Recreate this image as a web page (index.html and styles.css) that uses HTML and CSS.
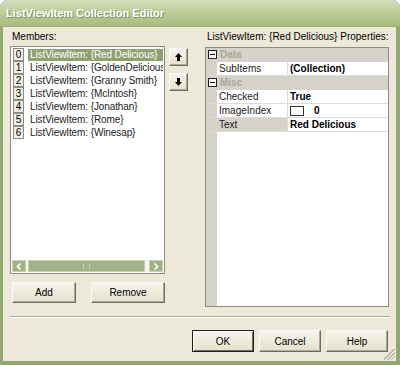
FILE: index.html
```html
<!DOCTYPE html>
<html>
<head>
<meta charset="utf-8">
<link rel="stylesheet" href="styles.css">
</head>
<body>
<div class="window">
  <div class="titlebar"><span class="title">ListViewItem Collection Editor</span></div>
  <div class="client">
    <div class="main">
      <div class="left">
        <div class="label">Members:</div>
        <div class="listrow">
          <div class="listbox">
            <ul class="items">
              <li class="sel"><span class="idx">0</span><span class="txt">ListViewItem: {Red Delicious}</span></li>
              <li><span class="idx">1</span><span class="txt">ListViewItem: {GoldenDelicious}</span></li>
              <li><span class="idx">2</span><span class="txt">ListViewItem: {Granny Smith}</span></li>
              <li><span class="idx">3</span><span class="txt">ListViewItem: {McIntosh}</span></li>
              <li><span class="idx">4</span><span class="txt">ListViewItem: {Jonathan}</span></li>
              <li><span class="idx">5</span><span class="txt">ListViewItem: {Rome}</span></li>
              <li><span class="idx">6</span><span class="txt">ListViewItem: {Winesap}</span></li>
            </ul>
            <div class="hscroll">
              <div class="sbtn"><svg width="6" height="7" viewBox="0 0 6 7"><path d="M4.5 0.5 L1.5 3.5 L4.5 6.5" fill="none" stroke="#fff" stroke-width="1.6"/></svg></div>
              <div class="thumb"><span class="grip-lines"></span></div>
              <div class="sbtn"><svg width="6" height="7" viewBox="0 0 6 7"><path d="M1.5 0.5 L4.5 3.5 L1.5 6.5" fill="none" stroke="#fff" stroke-width="1.6"/></svg></div>
            </div>
          </div>
          <div class="updown">
            <button class="btn arrow"><svg width="7" height="8" viewBox="0 0 7 8"><path d="M3.5 0 L7 4 L5 4 L5 8 L2 8 L2 4 L0 4 Z" fill="#000"/></svg></button>
            <button class="btn arrow"><svg width="7" height="8" viewBox="0 0 7 8"><path d="M3.5 8 L7 4 L5 4 L5 0 L2 0 L2 4 L0 4 Z" fill="#000"/></svg></button>
          </div>
        </div>
        <div class="addrem">
          <button class="btn add">Add</button>
          <button class="btn remove">Remove</button>
        </div>
      </div>
      <div class="right">
        <div class="label">ListViewItem: {Red Delicious} Properties:</div>
        <div class="grid">
          <div class="row cat"><span class="margin"><span class="exp"></span></span><span class="catname">Data</span></div>
          <div class="row"><span class="margin"></span><span class="name">SubItems</span><span class="value b">(Collection)</span></div>
          <div class="row cat"><span class="margin"><span class="exp"></span></span><span class="catname">Misc</span></div>
          <div class="row"><span class="margin"></span><span class="name">Checked</span><span class="value b">True</span></div>
          <div class="row"><span class="margin"></span><span class="name">ImageIndex</span><span class="value b"><span class="imgbox"></span>0</span></div>
          <div class="row selrow"><span class="margin"></span><span class="name">Text</span><span class="value b">Red Delicious</span></div>
        </div>
      </div>
    </div>
    <div class="sep"></div>
    <div class="footer">
      <button class="btn ok">OK</button>
      <button class="btn">Cancel</button>
      <button class="btn">Help</button>
    </div>
    <div class="sizegrip"></div>
  </div>
</div>
</body>
</html>
```

FILE: styles.css
```css
html, body {
  margin: 0;
  padding: 0;
  background: #ffffff;
}
body {
  font-family: "Liberation Sans", Arial, sans-serif;
  font-size: 10px;
  color: #000;
}
.window {
  width: 400px;
  height: 365px;
  display: flex;
  flex-direction: column;
  box-sizing: border-box;
  background: #93a871;
  border-radius: 7px 7px 0 0;
  overflow: hidden;
}
.titlebar {
  height: 27px;
  flex: none;
  display: flex;
  align-items: center;
  padding-left: 6px;
  background: linear-gradient(#d6e0bd 0%, #c3d1a2 35%, #b3c48c 70%, #a9bb82 100%);
  border-bottom: 1px solid #9aae77;
  box-sizing: border-box;
}
.title {
  font-family: "Liberation Sans", Arial, sans-serif;
  font-weight: bold;
  font-size: 11px;
  color: #fff;
  text-shadow: 1px 1px 0 #7f9160;
}
.client {
  position: relative;
  margin: 0 4px 4px 3px;
  flex: 1;
  background: #ece9d8;
  padding: 4px 7px 9px 7px;
  display: flex;
  flex-direction: column;
}
.main {
  display: flex;
  height: 276px;
}
.left {
  width: 178px;
  display: flex;
  flex-direction: column;
}
.label {
  height: 12px;
  line-height: 12px;
  padding-left: 2px;
  white-space: nowrap;
}
.left .label { margin-bottom: 3px; }
.right .label { margin-bottom: 4px; }
.listrow {
  display: flex;
  gap: 4px;
}
.listbox {
  width: 155px;
  height: 228px;
  box-sizing: border-box;
  border: 1px solid #8d8b82;
  background: #fff;
  display: flex;
  flex-direction: column;
  padding: 1px;
}
.items {
  list-style: none;
  margin: 0;
  padding: 0;
  flex: 1;
}
.items li {
  height: 13px;
  display: flex;
  align-items: center;
  white-space: nowrap;
  overflow: hidden;
}
.idx {
  width: 9px;
  height: 11px;
  flex: none;
  border: 1px solid #8d8b82;
  background: #f0efe8;
  text-align: center;
  line-height: 11px;
  margin-left: 1px;
  margin-right: 4px;
}
.txt {
  padding-left: 2px;
  height: 12px;
  line-height: 12px;
  flex: 1;
  letter-spacing: -0.1px;
  color: #222;
}
.sel .txt {
  background: #8f9f6d;
  color: #fff;
}
.hscroll {
  height: 12px;
  display: flex;
  gap: 2px;
  background: #f5f4ee;
}
.sbtn {
  width: 14px;
  height: 12px;
  box-sizing: border-box;
  background: #a1b384;
  border: 1px solid #c7d2b1;
  display: flex;
  align-items: center;
  justify-content: center;
}
.thumb {
  width: 117px;
  height: 12px;
  box-sizing: border-box;
  background: #a1b384;
  border: 1px solid #c5d1ae;
  display: flex;
  align-items: center;
  justify-content: center;
}
.grip-lines {
  width: 5px;
  height: 5px;
  border-left: 1px solid #c9d4b4;
  border-right: 1px solid #c9d4b4;
}
.hscroll .sbtn:last-child { margin-left: auto; }
.updown {
  display: flex;
  flex-direction: column;
  gap: 7px;
  padding-top: 2px;
}
.btn {
  font-family: "Liberation Sans", Arial, sans-serif;
  font-size: 10px;
  color: #000;
  background: linear-gradient(#f6f5ee, #ece9d8 60%, #e3e0cd);
  border: 1px solid;
  border-color: #fbfaf5 #6f6d62 #6f6d62 #fbfaf5;
  box-shadow: inset -1px -1px 0 #aca899;
  padding: 0;
  margin: 0;
  box-sizing: border-box;
  height: 22px;
  width: 62px;
  display: flex;
  align-items: center;
  justify-content: center;
}
.btn.arrow {
  width: 19px;
  height: 18px;
}
.addrem {
  display: flex;
  margin-top: 8px;
  padding-left: 2px;
  gap: 15px;
}
.btn.add { width: 64px; height: 21px; }
.btn.remove { width: 74px; height: 21px; }
.right {
  margin-left: 17px;
  width: 185px;
  display: flex;
  flex-direction: column;
}
.grid {
  height: 260px;
  box-sizing: border-box;
  border: 1px solid #8d8b82;
  background: #fff;
  background-image: linear-gradient(to right, #d5d2c9 0, #d5d2c9 11px, transparent 11px);
}
.row {
  height: 14px;
  display: flex;
  box-sizing: border-box;
  border-bottom: 1px solid #dedbd1;
  line-height: 13px;
  white-space: nowrap;
}
.margin {
  width: 11px;
  flex: none;
  background: #d5d2c9;
  position: relative;
}
.name {
  width: 71px;
  flex: none;
  padding-left: 2px;
  box-sizing: border-box;
  border-right: 1px solid #dedbd1;
  color: #202020;
}
.value {
  flex: 1;
  padding-left: 2px;
  display: flex;
  align-items: center;
}
.b { font-weight: bold; }
.cat {
  background: #d5d2c9;
  border-bottom-color: #d5d2c9;
}
.catname {
  font-weight: bold;
  color: #a9a79b;
  padding-left: 3px;
}
.exp {
  position: absolute;
  left: 2px;
  top: 2px;
  width: 9px;
  height: 9px;
  box-sizing: border-box;
  border: 1px solid #222;
  background: #fff;
}
.exp::after {
  content: "";
  position: absolute;
  left: 1px;
  top: 3px;
  width: 5px;
  height: 1px;
  background: #000;
}
.selrow .name { background: #d5d2c9; }
.imgbox {
  width: 14px;
  height: 10px;
  border: 1px solid #333;
  box-sizing: border-box;
  background: #fff;
  margin-right: 10px;
}
.sep {
  margin-top: 9px;
  height: 0;
  border-top: 1px solid #aca899;
  border-bottom: 1px solid #fff;
}
.footer {
  margin-top: 12px;
  display: flex;
  justify-content: flex-end;
  gap: 5px;
  padding-right: 1px;
}
.btn.ok {
  border: 1px solid #1f1f1f;
  box-shadow: inset 1px 1px 0 #fbfaf5, inset -1px -1px 0 #6f6d62;
}
.sizegrip {
  position: absolute;
  right: 1px;
  bottom: 1px;
  width: 11px;
  height: 11px;
  background: linear-gradient(135deg, transparent 0 45%, #b8b5a6 45% 52%, transparent 52% 62%, #b8b5a6 62% 69%, transparent 69% 79%, #b8b5a6 79% 86%, transparent 86%);
}
```
